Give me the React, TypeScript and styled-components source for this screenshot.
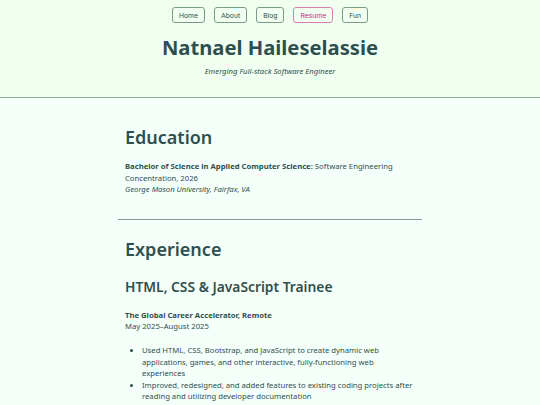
import React from "react";
import styled, { createGlobalStyle } from "styled-components";

const GlobalStyle = createGlobalStyle`
  html, body {
    margin: 0;
    padding: 0;
    background: #f5fffa;
  }
  body {
    font-family: "Noto Sans", "Open Sans", sans-serif;
    color: #2f4f4f;
  }
`;

const Header = styled.header`
  background: #f0fff0;
  border-bottom: 1px solid #8fa89a;
  padding: 7px 0 0;
  height: 90px;
  text-align: center;
`;

const Nav = styled.nav`
  display: flex;
  justify-content: center;
  gap: 9px;
`;

const NavButton = styled.button<{ $active?: boolean }>`
  font-family: "Inter", "Liberation Sans", sans-serif;
  font-size: 6.8px;
  height: 16px;
  padding: 0 6px;
  background: transparent;
  color: ${(p) => (p.$active ? "#c0307f" : "#2f4f4f")};
  border: 1px solid ${(p) => (p.$active ? "#d77fb0" : "#7c9a8a")};
  border-radius: 3px;
  cursor: pointer;
`;

const Title = styled.h1`
  margin: 10px 0 0;
  font-size: 20.2px;
  font-weight: 700;
  line-height: 28px;
`;

const Subtitle = styled.p`
  margin: 5px 0 0;
  font-size: 7.7px;
  font-style: italic;
`;

const Main = styled.main`
  width: 304px;
  margin: 0 auto;
  padding-top: 26px;
`;

const Section = styled.section<{ $top?: number }>`
  padding: ${(p) => p.$top ?? 0}px 7px 0;
`;

const Divider = styled.hr`
  border: none;
  border-top: 1px solid #8a9aa0;
  margin: 23px 0 0;
`;

const SectionTitle = styled.h2`
  margin: 0;
  font-size: 18px;
  font-weight: 600;
  line-height: 26px;
`;

const JobTitle = styled.h3`
  margin: 15px 0 0;
  font-size: 13.8px;
  font-weight: 600;
  line-height: 20px;
`;

const Text = styled.p<{ $gap?: number }>`
  margin: ${(p) => p.$gap ?? 0}px 0 0;
  font-size: 7.7px;
  line-height: 11.6px;
`;

const Em = styled.span`
  font-style: italic;
`;

const List = styled.ul`
  margin: 12px 0 0;
  padding-left: 17px;
  font-size: 7.7px;
  line-height: 11.6px;
`;

const Item = styled.li``;

const pages = ["Home", "About", "Blog", "Resume", "Fun"];

export default function App() {
  return (
    <>
      <GlobalStyle />
      <Header>
        <Nav>
          {pages.map((p) => (
            <NavButton key={p} $active={p === "Resume"}>
              {p}
            </NavButton>
          ))}
        </Nav>
        <Title>Natnael Haileselassie</Title>
        <Subtitle>Emerging Full-stack Software Engineer</Subtitle>
      </Header>
      <Main>
        <Section>
          <SectionTitle>Education</SectionTitle>
          <Text $gap={11}>
            <strong>Bachelor of Science in Applied Computer Science:</strong>{" "}
            Software Engineering Concentration, 2026
            <br />
            <Em>George Mason University, Fairfax, VA</Em>
          </Text>
        </Section>
        <Divider />
        <Section $top={16}>
          <SectionTitle>Experience</SectionTitle>
          <JobTitle>HTML, CSS &amp; JavaScript Trainee</JobTitle>
          <Text $gap={13}>
            <strong>The Global Career Accelerator, Remote</strong>
            <br />
            May 2025–August 2025
          </Text>
          <List>
            <Item>
              Used HTML, CSS, Bootstrap, and JavaScript to create dynamic web
              applications, games, and other interactive, fully-functioning web
              experiences
            </Item>
            <Item>
              Improved, redesigned, and added features to existing coding
              projects after reading and utilizing developer documentation
            </Item>
            <Item>
              Integrated third-party applications programming interfaces (APIs)
              in web projects
            </Item>
          </List>
        </Section>
      </Main>
    </>
  );
}
